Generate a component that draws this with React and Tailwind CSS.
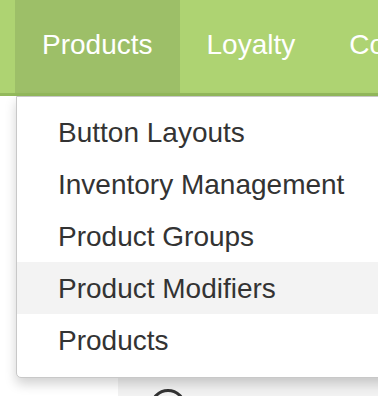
import React from 'react';

const menuItems = ['Button Layouts', 'Inventory Management', 'Product Groups', 'Product Modifiers', 'Products'];

export default function App() {
  return (
    <div className="w-[378px] h-[396px] overflow-hidden bg-white relative" style={{ fontFamily: '"Liberation Sans", Arial, sans-serif' }}>
      <nav className="h-[96px] bg-[#aed372] border-b-[3px] border-[#93b95c] flex pl-[15px]">
        <div className="relative h-full">
          <a className="h-full flex items-center px-[27px] bg-[#9dbf68] text-white text-[28px] pb-[3px]">Products</a>
          <div className="absolute left-[1px] top-[96px] w-[400px] bg-white border border-[#c8c8c8] rounded-b-[5px] shadow-[0_6px_12px_rgba(0,0,0,0.18)] pt-[9px] pb-[11px] z-10">
            <ul>
              {menuItems.map((item) => (
                <li
                  key={item}
                  className={`h-[52px] flex items-center pl-[41px] pt-[2px] text-[28px] text-[#333333] whitespace-nowrap ${item === 'Product Modifiers' ? 'bg-[#f3f3f3]' : ''}`}
                >
                  {item}
                </li>
              ))}
            </ul>
          </div>
        </div>
        <a className="h-full flex items-center px-[27px] text-white text-[28px] pb-[3px]">Loyalty</a>
        <a className="h-full flex items-center px-[27px] text-white text-[28px] pb-[3px] whitespace-nowrap">Configuration</a>
      </nav>
      <div className="pt-[281px] pl-[118px]">
        <div className="h-[60px] bg-[#f2f2f2] border-t border-[#dddddd] flex items-start gap-[10px] pl-[32px] pt-[11px]">
          <div className="w-[36px] h-[36px] rounded-full border-[3px] border-[#333333] shrink-0" />
          <span className="text-[28px] text-[#333333] leading-none pt-[6px]">active</span>
        </div>
      </div>
    </div>
  );
}
